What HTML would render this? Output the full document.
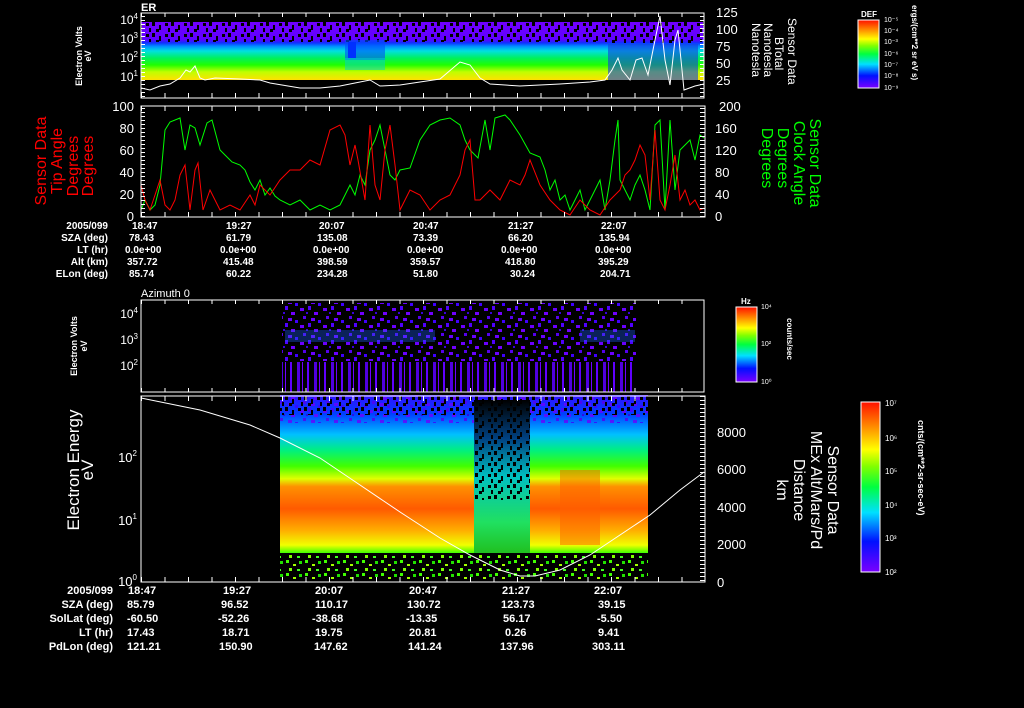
<!DOCTYPE html>
<html><head><meta charset="utf-8"><style>
html,body{margin:0;padding:0;background:#000;width:1024px;height:708px;overflow:hidden}
svg{display:block;font-family:"Liberation Sans",sans-serif;font-size:11px}
text{fill:#fff}
.s{font-weight:bold}
</style></head><body>
<svg width="1024" height="708" viewBox="0 0 1024 708" xmlns="http://www.w3.org/2000/svg">
<defs>
<linearGradient id="rb" x1="0" y1="1" x2="0" y2="0">
<stop offset="0" stop-color="#7a00ff"/><stop offset="0.18" stop-color="#0010ff"/><stop offset="0.35" stop-color="#00e0ff"/><stop offset="0.5" stop-color="#00ff40"/><stop offset="0.62" stop-color="#80ff00"/><stop offset="0.72" stop-color="#ffff00"/><stop offset="0.85" stop-color="#ff9000"/><stop offset="1" stop-color="#ff1000"/>
</linearGradient>
<linearGradient id="p1" x1="0" y1="0" x2="0" y2="1">
<stop offset="0" stop-color="#7000ff"/><stop offset="0.3" stop-color="#6000ff"/><stop offset="0.36" stop-color="#1030ff"/><stop offset="0.42" stop-color="#0090ff"/><stop offset="0.5" stop-color="#00e0e0"/><stop offset="0.62" stop-color="#00f060"/><stop offset="0.74" stop-color="#20ff00"/><stop offset="0.86" stop-color="#c0ff00"/><stop offset="1" stop-color="#ffe000"/>
</linearGradient>
<linearGradient id="p4" x1="0" y1="0" x2="0" y2="1">
<stop offset="0" stop-color="#3010ff"/><stop offset="0.12" stop-color="#0040ff"/><stop offset="0.25" stop-color="#00c0ff"/><stop offset="0.35" stop-color="#00f080"/><stop offset="0.45" stop-color="#40ff00"/><stop offset="0.53" stop-color="#e0ff00"/><stop offset="0.58" stop-color="#ff9000"/><stop offset="0.72" stop-color="#ff5a00"/><stop offset="0.86" stop-color="#ffb000"/><stop offset="0.95" stop-color="#f0ff00"/><stop offset="1" stop-color="#40ff00"/>
</linearGradient>
<linearGradient id="dip" x1="0" y1="0" x2="0" y2="1">
<stop offset="0" stop-color="#000"/><stop offset="0.25" stop-color="#004080"/><stop offset="0.5" stop-color="#00c0c0"/><stop offset="0.8" stop-color="#20e060"/><stop offset="1" stop-color="#20c020"/>
</linearGradient>
<pattern id="spk" width="23" height="17" patternUnits="userSpaceOnUse">
<rect x="1" y="2" width="4" height="3" fill="#6a00ff"/><rect x="9" y="0" width="3" height="4" fill="#5000ff"/><rect x="15" y="6" width="4" height="3" fill="#7000ff"/><rect x="4" y="10" width="3" height="3" fill="#5500ee"/><rect x="12" y="12" width="4" height="3" fill="#6a00ff"/><rect x="19" y="14" width="3" height="3" fill="#4000ff"/><rect x="7" y="6" width="2" height="2" fill="#3a00dd"/>
</pattern>
<pattern id="blk" width="19" height="11" patternUnits="userSpaceOnUse">
<rect x="0" y="0" width="3" height="4" fill="#000"/><rect x="7" y="3" width="2" height="5" fill="#000"/><rect x="13" y="1" width="3" height="3" fill="#000"/><rect x="4" y="7" width="3" height="3" fill="#000"/><rect x="16" y="6" width="2" height="4" fill="#000"/>
</pattern>
<pattern id="spg" width="19" height="13" patternUnits="userSpaceOnUse">
<rect x="1" y="1" width="3" height="3" fill="#40ff00"/><rect x="8" y="5" width="3" height="2" fill="#a0ff00"/><rect x="14" y="2" width="3" height="3" fill="#20e000"/><rect x="4" y="9" width="3" height="3" fill="#80ff00"/><rect x="12" y="10" width="3" height="2" fill="#40ff20"/>
</pattern>
<pattern id="bars" width="17" height="40" patternUnits="userSpaceOnUse">
<rect x="1" y="0" width="2" height="40" fill="#6000ff"/><rect x="8" y="0" width="3" height="40" fill="#5000e0"/><rect x="13" y="0" width="1" height="40" fill="#7000ff"/>
</pattern>
<pattern id="tx" x="141" width="23.5" height="10" patternUnits="userSpaceOnUse"><rect x="0" y="0" width="1" height="10" fill="#fff"/></pattern>
<pattern id="ty" y="0" width="10" height="4" patternUnits="userSpaceOnUse"><rect x="0" y="0" width="10" height="1" fill="#fff"/></pattern>
</defs>

<!-- Panel 1 -->
<rect x="141" y="22" width="563" height="58" fill="url(#p1)"/>
<rect x="141" y="22" width="563" height="20" fill="url(#blk)"/>
<rect x="345" y="40" width="40" height="20" fill="#0050ff" opacity="0.6"/>
<rect x="348" y="42" width="8" height="16" fill="#0030ff"/>
<rect x="345" y="58" width="40" height="12" fill="#00d0d0" opacity="0.5"/>
<rect x="608" y="44" width="90" height="36" fill="#1040e0" opacity="0.6"/>
<rect x="608" y="22" width="90" height="22" fill="url(#blk)"/>
<polyline fill="none" stroke="#fff" stroke-width="1" points="141,88 150,90 160,86 170,84 180,78 186,70 190,72 195,66 200,78 205,80 215,78 240,79 260,80 270,83 300,88 320,88 340,86 355,83 370,80 380,86 400,85 420,82 440,79 460,62 470,65 480,78 490,84 520,86 560,84 590,82 605,80 612,70 618,58 622,70 630,80 636,60 642,58 648,75 655,40 660,16 665,60 670,85 675,40 678,30 684,90 695,86 704,84"/>
<rect x="141" y="13" width="563" height="85" fill="none" stroke="#fff" stroke-width="1"/>
<rect x="141" y="13" width="563" height="4" fill="url(#tx)"/><rect x="141" y="93" width="563" height="5" fill="url(#tx)"/>
<rect x="141" y="13" width="4" height="85" fill="url(#ty)"/><rect x="700" y="13" width="4" height="85" fill="url(#ty)"/>
<text x="141" y="11" class="s">ER</text>
<g text-anchor="end" font-size="12"><text x="138" y="24">10<tspan dy="-5" font-size="8">4</tspan></text><text x="138" y="43">10<tspan dy="-5" font-size="8">3</tspan></text><text x="138" y="62">10<tspan dy="-5" font-size="8">2</tspan></text><text x="138" y="81">10<tspan dy="-5" font-size="8">1</tspan></text></g>
<g font-size="13"><text x="716" y="17">125</text><text x="716" y="34">100</text><text x="716" y="51">75</text><text x="716" y="68">50</text><text x="716" y="85">25</text></g>
<text transform="translate(82,56) rotate(-90)" text-anchor="middle" font-size="9" class="s">Electron Volts</text>
<text transform="translate(91,56) rotate(-90)" text-anchor="middle" font-size="9" class="s">eV</text>
<g transform="rotate(90)" font-size="12">
<text x="18" y="-788">Sensor Data</text><text x="37" y="-775">BTotal</text><text x="23" y="-764">Nanotesla</text><text x="23" y="-752">Nanotesla</text>
</g>
<rect x="858" y="20" width="21" height="68" fill="url(#rb)" stroke="#fff"/>
<text x="861" y="17" font-size="8" class="s">DEF</text>
<g font-size="7"><text x="884" y="22">10⁻⁵</text><text x="884" y="33">10⁻⁴</text><text x="884" y="44">10⁻³</text><text x="884" y="56">10⁻⁶</text><text x="884" y="67">10⁻⁷</text><text x="884" y="78">10⁻⁸</text><text x="884" y="90">10⁻⁹</text></g>
<text transform="translate(912,5) rotate(90)" font-size="8" class="s">ergs/(cm**2 sr eV s)</text>

<!-- Panel 2 -->
<polyline fill="none" stroke="#00ff00" stroke-width="1" points="141,210 145,200 150,210 155,205 160,185 165,130 170,122 180,118 185,150 190,125 195,128 200,145 207,123 212,120 220,150 225,155 232,162 240,165 245,170 250,182 255,190 260,180 265,195 270,188 275,196 280,200 290,205 300,200 310,210 320,205 330,210 340,205 350,185 355,195 360,175 365,185 370,150 375,140 380,125 390,175 395,180 400,170 410,168 420,140 430,125 440,120 450,118 460,125 465,140 470,150 478,158 485,120 490,150 495,118 505,115 510,120 520,135 530,153 540,157 545,170 550,190 555,180 560,200 565,195 570,210 575,200 580,190 585,210 590,200 600,180 605,210 610,180 615,140 618,120 620,180 625,190 630,200 635,185 640,175 645,190 650,210 655,125 660,120 665,210 670,120 675,190 680,150 690,140 695,160 700,135 704,138"/>
<polyline fill="none" stroke="#ff0000" stroke-width="1" points="141,185 145,200 150,210 155,195 160,180 165,205 170,210 175,200 180,175 185,165 190,210 195,170 198,163 203,210 210,190 215,200 220,210 230,205 240,210 250,195 255,205 260,185 270,195 280,180 290,170 300,170 310,160 320,165 330,130 340,125 345,135 350,165 355,145 358,160 365,200 370,125 375,185 380,200 385,150 390,125 395,165 400,210 405,200 410,190 420,195 430,210 440,200 450,195 460,175 465,150 470,140 475,200 480,200 490,190 500,200 510,180 520,185 525,175 530,160 540,185 550,200 560,210 570,215 580,200 590,210 600,215 610,200 620,190 625,175 630,170 635,160 640,145 645,155 650,200 655,130 660,200 665,210 670,185 675,155 680,200 685,190 690,205 695,200 700,210 704,208"/>
<rect x="141" y="106" width="564" height="111" fill="none" stroke="#fff"/>
<rect x="141" y="106" width="563" height="5" fill="url(#tx)"/><rect x="141" y="212" width="563" height="5" fill="url(#tx)"/>
<rect x="141" y="106" width="4" height="111" fill="url(#ty)"/><rect x="700" y="106" width="5" height="111" fill="url(#ty)"/>
<g text-anchor="end" font-size="13"><text x="134" y="111">100</text><text x="134" y="133">80</text><text x="134" y="155">60</text><text x="134" y="177">40</text><text x="134" y="199">20</text><text x="134" y="221">0</text></g>
<g font-size="13"><text x="719" y="111">200</text><text x="715" y="133">160</text><text x="715" y="155">120</text><text x="715" y="177">80</text><text x="715" y="199">40</text><text x="715" y="221">0</text></g>
<g transform="rotate(-90)" font-size="16" text-anchor="middle">
<text x="-161" y="46" style="fill:#f00">Sensor Data</text><text x="-161" y="62" style="fill:#f00">Tip Angle</text><text x="-166" y="78" style="fill:#f00">Degrees</text><text x="-166" y="93" style="fill:#f00">Degrees</text>
</g>
<g transform="rotate(90)" font-size="16" text-anchor="middle">
<text x="163" y="-810" style="fill:#00ff00">Sensor Data</text><text x="163" y="-794" style="fill:#00ff00">Clock Angle</text><text x="158" y="-778" style="fill:#00ff00">Degrees</text><text x="158" y="-762" style="fill:#00ff00">Degrees</text>
</g>
<g class="s" text-anchor="end" font-size="10"><text x="108" y="229">2005/099</text><text x="108" y="241">SZA (deg)</text><text x="108" y="253">LT (hr)</text><text x="108" y="265">Alt (km)</text><text x="108" y="277">ELon (deg)</text></g>
<g class="s" font-size="10">
<text x="132" y="229">18:47</text><text x="226" y="229">19:27</text><text x="319" y="229">20:07</text><text x="413" y="229">20:47</text><text x="508" y="229">21:27</text><text x="601" y="229">22:07</text>
<text x="129" y="241">78.43</text><text x="226" y="241">61.79</text><text x="317" y="241">135.08</text><text x="413" y="241">73.39</text><text x="508" y="241">66.20</text><text x="599" y="241">135.94</text>
<text x="125" y="253">0.0e+00</text><text x="220" y="253">0.0e+00</text><text x="313" y="253">0.0e+00</text><text x="407" y="253">0.0e+00</text><text x="501" y="253">0.0e+00</text><text x="595" y="253">0.0e+00</text>
<text x="127" y="265">357.72</text><text x="223" y="265">415.48</text><text x="317" y="265">398.59</text><text x="410" y="265">359.57</text><text x="505" y="265">418.80</text><text x="598" y="265">395.29</text>
<text x="129" y="277">85.74</text><text x="226" y="277">60.22</text><text x="317" y="277">234.28</text><text x="413" y="277">51.80</text><text x="510" y="277">30.24</text><text x="600" y="277">204.71</text>
</g>
<text x="141" y="297" font-size="11">Azimuth 0</text>

<!-- Panel 3 -->
<rect x="282" y="303" width="354" height="58" fill="url(#spk)"/>
<rect x="285" y="330" width="150" height="12" fill="#2060ff" opacity="0.35"/>
<rect x="580" y="330" width="55" height="12" fill="#2060ff" opacity="0.35"/>
<rect x="282" y="362" width="354" height="30" fill="url(#bars)"/>
<rect x="141" y="300" width="563" height="92" fill="none" stroke="#fff"/>
<rect x="141" y="300" width="563" height="4" fill="url(#tx)"/><rect x="141" y="388" width="563" height="4" fill="url(#tx)"/>
<g text-anchor="end" font-size="12"><text x="138" y="318">10<tspan dy="-5" font-size="8">4</tspan></text><text x="138" y="344">10<tspan dy="-5" font-size="8">3</tspan></text><text x="138" y="370">10<tspan dy="-5" font-size="8">2</tspan></text></g>
<text transform="translate(77,346) rotate(-90)" text-anchor="middle" font-size="9" class="s">Electron Volts</text>
<text transform="translate(87,346) rotate(-90)" text-anchor="middle" font-size="9" class="s">eV</text>
<rect x="736" y="307" width="21" height="75" fill="url(#rb)" stroke="#fff"/>
<text x="741" y="304" font-size="8" class="s">Hz</text>
<g font-size="7"><text x="761" y="309">10⁴</text><text x="761" y="346">10²</text><text x="761" y="384">10⁰</text></g>
<text transform="translate(787,318) rotate(90)" font-size="8" class="s">counts/sec</text>

<!-- Panel 4 -->
<rect x="280" y="395" width="368" height="158" fill="url(#p4)"/>
<rect x="280" y="395" width="368" height="28" fill="url(#spk)" opacity="0.8"/>
<rect x="280" y="395" width="368" height="20" fill="url(#blk)"/>
<rect x="474" y="400" width="56" height="153" fill="url(#dip)"/>
<rect x="474" y="400" width="56" height="100" fill="url(#blk)"/>
<rect x="280" y="553" width="368" height="28" fill="url(#spg)"/>
<rect x="560" y="470" width="40" height="75" fill="#ff6000" opacity="0.5"/>
<polyline fill="none" stroke="#fff" stroke-width="1" points="141,398 200,410 250,425 280,438 320,458 360,485 400,512 440,538 470,555 500,570 520,576 535,576 560,570 590,555 620,535 650,515 680,490 704,472"/>
<rect x="141" y="396" width="564" height="186" fill="none" stroke="#fff"/>
<rect x="141" y="577" width="563" height="5" fill="url(#tx)"/><rect x="141" y="396" width="563" height="5" fill="url(#tx)"/>
<rect x="700" y="396" width="5" height="186" fill="url(#ty)"/>
<g text-anchor="end" font-size="13"><text x="137" y="462">10<tspan dy="-6" font-size="8">2</tspan></text><text x="137" y="525">10<tspan dy="-6" font-size="8">1</tspan></text><text x="137" y="586">10<tspan dy="-6" font-size="8">0</tspan></text></g>
<g font-size="13"><text x="717" y="437">8000</text><text x="717" y="474">6000</text><text x="717" y="512">4000</text><text x="717" y="549">2000</text><text x="717" y="587">0</text></g>
<g transform="rotate(-90)" font-size="17" text-anchor="middle"><text x="-470" y="79">Electron Energy</text><text x="-470" y="93">eV</text></g>
<g transform="rotate(90)" font-size="16" text-anchor="middle"><text x="490" y="-828">Sensor Data</text><text x="490" y="-811">MEx Alt/Mars/Pd</text><text x="490" y="-794">Distance</text><text x="490" y="-777">km</text></g>
<rect x="861" y="402" width="19" height="170" fill="url(#rb)" stroke="#fff"/>
<g font-size="8"><text x="885" y="406">10⁷</text><text x="885" y="441">10⁶</text><text x="885" y="474">10⁵</text><text x="885" y="508">10⁴</text><text x="885" y="541">10³</text><text x="885" y="575">10²</text></g>
<text transform="translate(918,420) rotate(90)" font-size="9" class="s">cnts/(cm**2-sr-sec-eV)</text>
<g class="s" text-anchor="end" font-size="11"><text x="113" y="594">2005/099</text><text x="113" y="608">SZA (deg)</text><text x="113" y="622">SolLat (deg)</text><text x="113" y="636">LT (hr)</text><text x="113" y="650">PdLon (deg)</text></g>
<g class="s" font-size="11">
<text x="128" y="594">18:47</text><text x="223" y="594">19:27</text><text x="315" y="594">20:07</text><text x="409" y="594">20:47</text><text x="502" y="594">21:27</text><text x="594" y="594">22:07</text>
<text x="127" y="608">85.79</text><text x="221" y="608">96.52</text><text x="315" y="608">110.17</text><text x="407" y="608">130.72</text><text x="501" y="608">123.73</text><text x="598" y="608">39.15</text>
<text x="127" y="622">-60.50</text><text x="218" y="622">-52.26</text><text x="312" y="622">-38.68</text><text x="406" y="622">-13.35</text><text x="503" y="622">56.17</text><text x="597" y="622">-5.50</text>
<text x="127" y="636">17.43</text><text x="222" y="636">18.71</text><text x="315" y="636">19.75</text><text x="409" y="636">20.81</text><text x="505" y="636">0.26</text><text x="598" y="636">9.41</text>
<text x="127" y="650">121.21</text><text x="219" y="650">150.90</text><text x="314" y="650">147.62</text><text x="408" y="650">141.24</text><text x="500" y="650">137.96</text><text x="592" y="650">303.11</text>
</g>
</svg>
</body></html>
